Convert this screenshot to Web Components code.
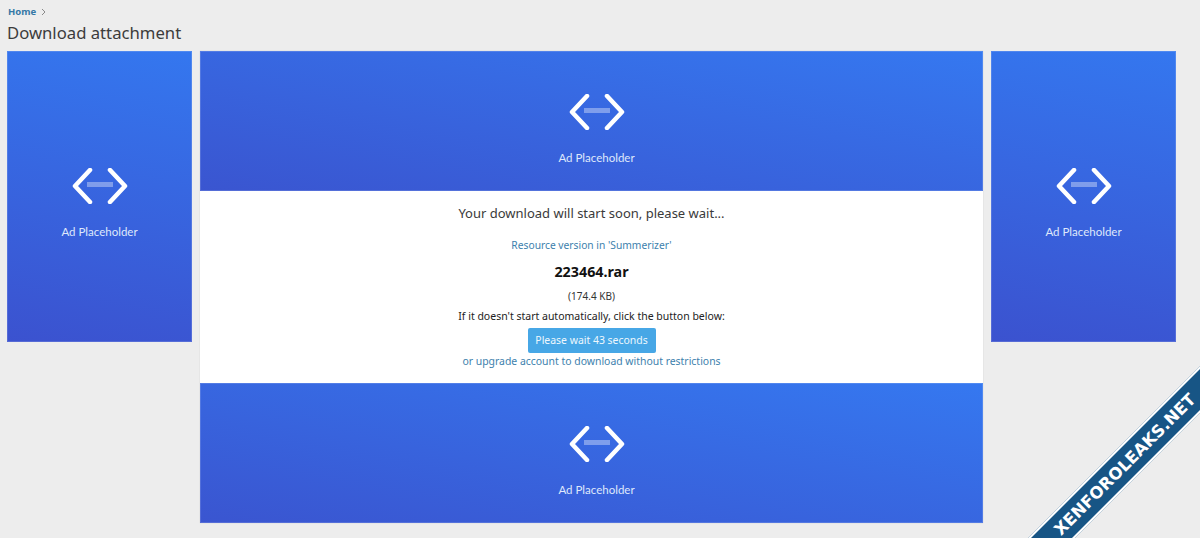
<!DOCTYPE html>
<html>
<head>
<meta charset="utf-8">
<title>Download attachment</title>
<style>
html, body { margin: 0; height: 538px; overflow: hidden; }
body { background: #ededed; font-family: "Noto Sans", sans-serif; color: #333; }
</style>
</head>
<body>
<page-header></page-header>
<download-layout>
    <ad-box slot="left" tall></ad-box>
    <download-panel></download-panel>
    <ad-box slot="right" tall></ad-box>
</download-layout>
<leak-ribbon>XENFOROLEAKS.NET</leak-ribbon>

<script>
class PageHeader extends HTMLElement {
    constructor() {
        super();
        this.attachShadow({ mode: "open" });
        this.shadowRoot.innerHTML = `
<style>
:host { display: block; padding: 5px 8px 0 7px; height: 46px; box-sizing: border-box; }
.crumb { display: flex; align-items: center; gap: 5px; height: 13px; padding-left: 1px; font-size: 9.5px; font-weight: 700; color: #3578a6; }
svg { display: block; }
h1 { margin: 2px 0 0; font-size: 16.7px; line-height: 26px; font-weight: 400; color: #3c3c3c; }
</style>
<div class="crumb"><span>Home</span>
<svg width="5" height="8" viewBox="0 0 5 8"><path d="M1 1l3 3-3 3" fill="none" stroke="#8a8a8a" stroke-width="1"/></svg></div>
<h1>Download attachment</h1>`;
    }
}

class AdBox extends HTMLElement {
    constructor() {
        super();
        this.attachShadow({ mode: "open" });
        this.shadowRoot.innerHTML = `
<style>
:host { display: flex; flex-direction: column; align-items: center; justify-content: center; box-sizing: border-box;
    height: 140px; padding: 15px 0 0 10px; color: #dfe8fb; font-family: Lato, sans-serif; font-size: 11.5px;
    background: linear-gradient(to top right, #3a55d0, #3578f0);
    box-shadow: inset 0 0 0 1px rgba(255, 255, 255, .14); }
:host([tall]) { height: 291px; padding: 12px 0 0; background: linear-gradient(10deg, #3b52cf, #3477ef); }
svg { display: block; margin-bottom: 21px; }
</style>
<svg width="56" height="36" viewBox="0 0 56 36">
<path d="M18 2L3 18l15 16M38 2l15 16-15 16" fill="none" stroke="#fff" stroke-width="4.5" stroke-linecap="round" stroke-linejoin="round"/>
<rect x="15" y="14" width="26" height="5" fill="#fff" fill-opacity=".36"/>
</svg>
<span>Ad Placeholder</span>`;
    }
}

class DownloadPanel extends HTMLElement {
    constructor() {
        super();
        this.attachShadow({ mode: "open" });
        this.shadowRoot.innerHTML = `
<style>
:host { display: block; background: #fff; box-shadow: 0 0 1px #c4c4c4; }
.body { height: 192px; box-sizing: border-box; padding-top: 12px; display: flex; flex-direction: column; align-items: center; font-size: 11px; color: #222; }
h2 { margin: 0; font-size: 13px; line-height: 20px; font-weight: 400; color: #3a3a3a; }
a { color: #3d81ad; text-decoration: none; }
.res { margin-top: 14px; line-height: 16px; font-size: 10.25px; }
.file { margin-top: 9px; font-size: 14.3px; line-height: 20px; font-weight: 700; color: #111; }
.size { margin-top: 7px; font-size: 10px; line-height: 14px; color: #333; }
.hint { margin-top: 6px; line-height: 14px; font-size: 10.5px; }
.btn { margin-top: 5px; width: 128px; height: 25px; line-height: 25px; text-align: center; border-radius: 2px; background: #47a7e6; color: #eef7fd; font-size: 10.45px; }
.up { line-height: 16px; font-size: 10.43px; }
</style>
<ad-box></ad-box>
<div class="body">
<h2>Your download will start soon, please wait...</h2>
<a class="res" href="#">Resource version in 'Summerizer'</a>
<div class="file">223464.rar</div>
<div class="size">(174.4 KB)</div>
<div class="hint">If it doesn't start automatically, click the button below:</div>
<div class="btn">Please wait 43 seconds</div>
<a class="up" href="#">or upgrade account to download without restrictions</a>
</div>
<ad-box></ad-box>`;
    }
}

class DownloadLayout extends HTMLElement {
    constructor() {
        super();
        this.attachShadow({ mode: "open" });
        this.shadowRoot.innerHTML = `
<style>
:host { display: grid; grid-template-columns: 185px 783px 185px; column-gap: 8px; align-items: start; padding-left: 7px; margin-top: 5px; }
</style>
<slot name="left"></slot>
<slot></slot>
<slot name="right"></slot>`;
    }
}

// corner overlay, the box clips the rotated band at the window edge
class LeakRibbon extends HTMLElement {
    constructor() {
        super();
        this.attachShadow({ mode: "open" });
        this.shadowRoot.innerHTML = `
<style>
:host { position: absolute; left: 1020px; top: 358px; width: 180px; height: 180px; overflow: hidden; }
.band { position: absolute; left: -45px; top: 90px; width: 300px; height: 33px; box-sizing: border-box;
    transform: rotate(-45deg); background: #175585; border-top: 2px solid #fff; border-bottom: 2px solid #fff;
    display: flex; align-items: center; justify-content: center; color: #fff;
    font-family: "DejaVu Sans", sans-serif; font-weight: 700; font-size: 16.5px; white-space: nowrap; }
</style>
<div class="band"><slot></slot></div>`;
    }
}

customElements.define("ad-box", AdBox);
customElements.define("page-header", PageHeader);
customElements.define("download-panel", DownloadPanel);
customElements.define("download-layout", DownloadLayout);
customElements.define("leak-ribbon", LeakRibbon);
</script>
</body>
</html>
